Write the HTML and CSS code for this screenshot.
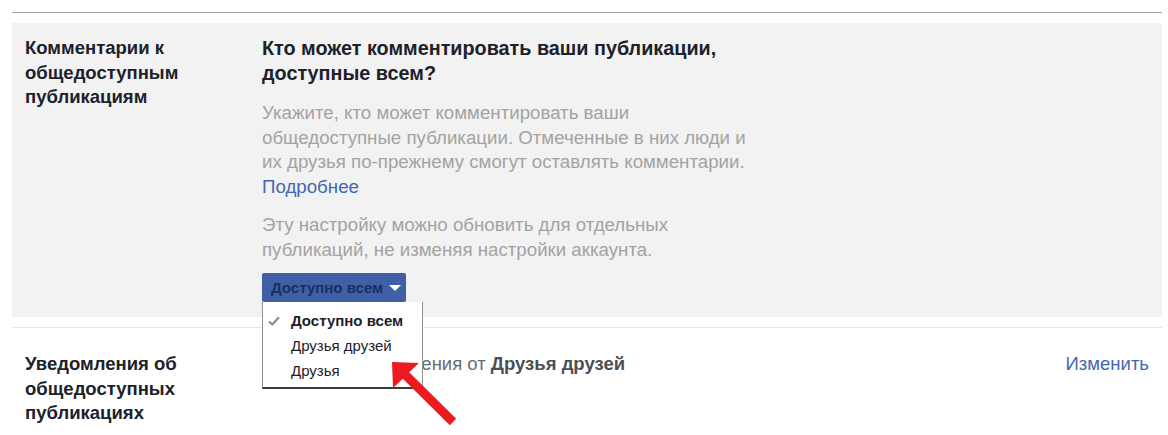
FILE: index.html
```html
<!DOCTYPE html>
<html lang="ru">
<head>
<meta charset="utf-8">
<link rel="stylesheet" href="styles.css">
</head>
<body>
<div class="page">
  <div class="top-rule"></div>
  <section class="panel">
    <div class="label">Комментарии к общедоступным публикациям</div>
    <div class="content">
      <h2 class="question">Кто может комментировать ваши публикации, доступные всем?</h2>
      <p class="desc">Укажите, кто может комментировать ваши общедоступные публикации. Отмеченные в них люди и их друзья по-прежнему смогут оставлять комментарии.<br><a class="link" href="#">Подробнее</a></p>
      <p class="desc desc-second">Эту настройку можно обновить для отдельных публикаций, не изменяя настройки аккаунта.</p>
      <div class="select-wrap">
        <button class="select-btn">Доступно всем<span class="caret"></span></button>
        <ul class="menu">
          <li class="item selected"><svg class="check" viewBox="0 0 12 10" width="12" height="10"><path d="M1 5.5 L4.2 8.5 L11 1.2" fill="none" stroke="#8d8d8d" stroke-width="2.2"/></svg>Доступно всем</li>
          <li class="item">Друзья друзей</li>
          <li class="item">Друзья</li>
        </ul>
      </div>
    </div>
  </section>
  <div class="divider"></div>
  <section class="row">
    <div class="label">Уведомления об общедоступных публикациях</div>
    <div class="row-text">Получать уведомления от <b>Друзья друзей</b></div>
    <a class="edit" href="#">Изменить</a>
  </section>
  <svg class="arrow" viewBox="0 0 80 80" width="80" height="80">
    <path d="M10 12 L37 13 L27.2 22.3 L74.2 68.8 L67.8 75.2 L20.8 28.7 L11 38 Z" fill="#ec1b1f"/>
  </svg>
</div>
</body>
</html>
```

FILE: styles.css
```css
html, body {
  margin: 0;
  padding: 0;
  background: #ffffff;
  font-family: "Liberation Sans", Arial, sans-serif;
}

.page {
  position: relative;
  margin: 0 6px 0 12px;
  padding-top: 12px;
  height: 423px;
  overflow: hidden;
}

.top-rule {
  height: 1px;
  background: #a8a8a8;
  margin-bottom: 10px;
}

.panel {
  background: #f2f2f2;
  display: grid;
  grid-template-columns: 237px 1fr;
  padding: 13px 13px 15px 13px;
}

.divider {
  height: 1px;
  background: #e6e6e6;
  margin-top: 10px;
}

.label {
  font-size: 18.5px;
  font-weight: bold;
  line-height: 24.5px;
  color: #1d2129;
  width: 180px;
}

.content {
  width: 500px;
}

.question {
  margin: 0;
  font-size: 19.8px;
  font-weight: bold;
  line-height: 24.5px;
  color: #1d2129;
}

.desc {
  margin: 16px 0 0 0;
  font-size: 18.7px;
  line-height: 24.5px;
  color: #a3a3a3;
}

.desc-second {
  margin-top: 14px;
}

.link {
  color: #4267b2;
  text-decoration: none;
}

.select-wrap {
  position: relative;
  margin-top: 11px;
  width: 144px;
}

.select-btn {
  display: flex;
  align-items: center;
  height: 29px;
  width: 144px;
  padding: 0 0 0 9px;
  border: none;
  border-radius: 2px;
  background: #3f5fa6;
  color: #1b2f5e;
  font-family: "Liberation Sans", Arial, sans-serif;
  font-size: 15px;
  font-weight: bold;
}

.caret {
  margin-left: 6px;
  width: 0;
  height: 0;
  border-left: 6px solid transparent;
  border-right: 6px solid transparent;
  border-top: 6px solid #ffffff;
}

.menu {
  position: absolute;
  left: 0;
  top: 29px;
  z-index: 5;
  margin: 0;
  padding: 6px 0 4px 0;
  list-style: none;
  width: 159px;
  background: #ffffff;
  border: 1px solid #8f8f8f;
  border-top: none;
  border-bottom: 2px solid #3a3a3a;
}

.item {
  position: relative;
  padding-left: 28px;
  font-size: 15px;
  line-height: 25px;
  color: #1d2129;
}

.item.selected {
  font-weight: bold;
}

.check {
  position: absolute;
  left: 5px;
  top: 8px;
}

.row {
  display: grid;
  grid-template-columns: 237px 1fr auto;
  padding: 24px 13px 0 13px;
}

.row-text {
  font-size: 18.5px;
  line-height: 24.5px;
  color: #6a6a6a;
}

.row-text b {
  color: #4b4f56;
}

.edit {
  font-size: 18.5px;
  line-height: 24.5px;
  color: #4267b2;
  text-decoration: none;
}

.arrow {
  position: absolute;
  left: 370px;
  top: 350px;
  z-index: 10;
}
```
